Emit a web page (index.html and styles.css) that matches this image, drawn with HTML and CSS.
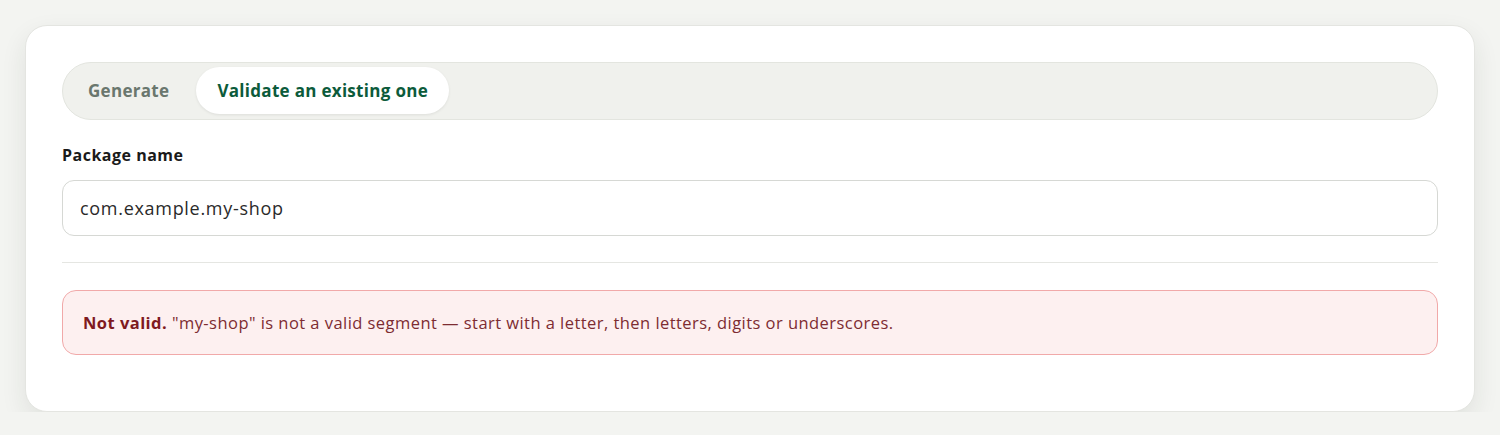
FILE: index.html
```html
<!DOCTYPE html>
<html lang="en">
<head>
<meta charset="utf-8">
<title>Package name validator</title>
<link rel="stylesheet" href="styles.css">
</head>
<body>
<main class="card">
  <div class="tabs" role="tablist">
    <button class="tab" role="tab">Generate</button>
    <button class="tab tab-active" role="tab">Validate an existing one</button>
  </div>
  <label class="field-label" for="pkg">Package name</label>
  <input id="pkg" class="field-input" type="text" value="com.example.my-shop">
  <hr class="divider">
  <div class="alert"><strong>Not valid.</strong> "my-shop" is not a valid segment — start with a letter, then letters, digits or underscores.</div>
</main>
</body>
</html>
```
FILE: styles.css
```css
html, body {
  margin: 0;
  padding: 0;
  background: #f3f4f1;
}
body {
  padding: 25px 25px 0 25px;
  font-family: "Open Sans", "Noto Sans", sans-serif;
  color: #1c1c1c;
}
.card {
  background: #fff;
  border: 1px solid #e4e5e1;
  border-radius: 22px;
  padding: 36px 36px 56px 36px;
  box-shadow: 0 10px 26px rgba(30, 40, 30, 0.09);
  display: flex;
  flex-direction: column;
}
.tabs {
  display: flex;
  gap: 6px;
  background: #f0f1ed;
  border: 1px solid #e3e5df;
  border-radius: 999px;
  padding: 4px;
  height: 48px;
}
.tab {
  font-family: inherit;
  font-size: 17px;
  letter-spacing: 0.3px;
  font-weight: 700;
  border: none;
  background: transparent;
  color: #6a776e;
  padding: 0 21px;
  border-radius: 999px;
  height: 47px;
  cursor: pointer;
}
.tab-active {
  background: #fff;
  color: #0c5b3b;
  box-shadow: 0 1px 3px rgba(0, 0, 0, 0.08);
}
.field-label {
  margin-top: 24px;
  font-size: 16px;
  letter-spacing: 0.5px;
  font-weight: 700;
  color: #1a1a1a;
  line-height: 22px;
}
.field-input {
  margin-top: 14px;
  height: 56px;
  box-sizing: border-box;
  border: 1px solid #d6d8d4;
  border-radius: 12px;
  padding: 0 17px;
  font-family: inherit;
  font-size: 18px;
  letter-spacing: 0.7px;
  color: #2a2a2a;
  background: #fff;
  outline: none;
}
.divider {
  margin: 26px 0 0 0;
  border: none;
  border-top: 1px solid #e5e6e2;
  height: 0;
}
.alert {
  margin-top: 27px;
  background: #fdf0f0;
  border: 1px solid #f1a9a9;
  border-radius: 14px;
  padding: 0 20px;
  height: 65px;
  box-sizing: border-box;
  display: flex;
  align-items: center;
  font-size: 16.5px;
  letter-spacing: 0.45px;
  color: #7d2c32;
  white-space: pre;
}
.alert strong {
  color: #7f1a1f;
  font-weight: 700;
}
```
